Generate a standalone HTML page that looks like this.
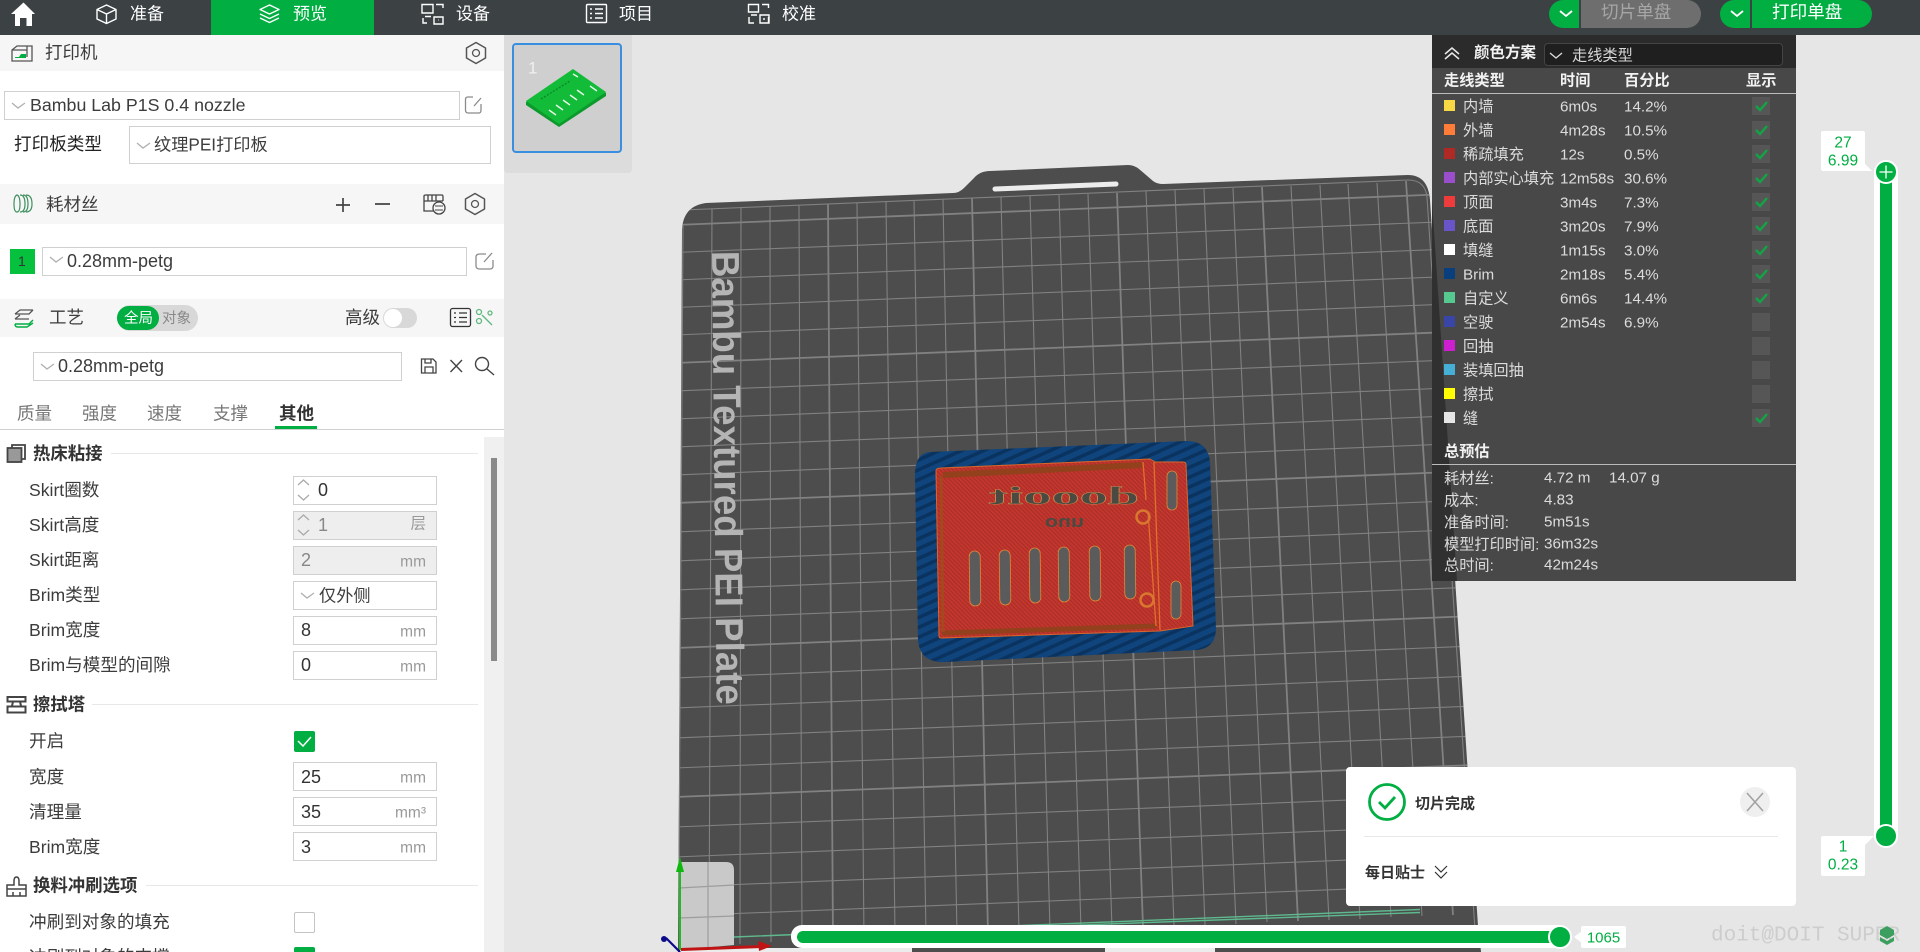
<!DOCTYPE html>
<html lang="zh">
<head>
<meta charset="utf-8">
<title>Bambu Studio</title>
<style>
html,body{margin:0;padding:0;width:1920px;height:952px;overflow:hidden;background:#e6e6e6}
body{position:relative;font-family:"Liberation Sans","Noto Sans CJK SC",sans-serif;color:#333}
.a{position:absolute}
.t{position:absolute;white-space:nowrap;line-height:1;transform:translateY(-50%)}
.c{margin-top:1px}
svg{position:absolute;overflow:visible}
.box{position:absolute;box-sizing:border-box;border:1.5px solid #d0d0d0;background:#fff}
.lab{font-size:17.6px;left:29px;color:#3c3c3c;margin-top:1px}
.val{font-size:18px;color:#333}
.unit{font-size:15.5px;color:#999;right:1494px}
.sec{font-size:17.4px;font-weight:700;left:33px;color:#333;margin-top:1px}
.hr{position:absolute;height:1px;background:#e8e8e8;right:1442px}
.p{font-size:15.2px;color:#dcdcdc}
.ph{font-size:15.2px;color:#f2f2f2;font-weight:700;margin-top:1px}
.sw{position:absolute;left:1444px;width:11px;height:11px}
.cb{position:absolute;left:1752px;width:18px;height:18px;background:#565656}
.g{color:#00ae42;font-size:15px}
</style>
</head>
<body>

<!-- 3D viewport -->
<svg width="1920" height="952" style="left:0;top:0" viewBox="0 0 1920 952">
<defs>
<clipPath id="pl"><path d="M678 960L682 230Q683 206 706 203L953 193Q959 193 964 188L974 178Q980 171 990 171L1128 165Q1134 165 1139 169L1153 181Q1157 184 1163 184L1408 175Q1428 175 1430 200L1478 926L1482 960Z"/></clipPath>
<pattern id="hb" width="9" height="9" patternUnits="userSpaceOnUse" patternTransform="rotate(-24)">
<rect width="9" height="9" fill="#0f447d"/><rect width="9" height="3.500" fill="#0a335f"/>
</pattern>
<pattern id="hr" width="3" height="3" patternUnits="userSpaceOnUse" patternTransform="rotate(45)">
<rect width="3" height="3" fill="#c4372e"/><rect width="3" height="1.200" fill="#ab2e28"/>
</pattern>
</defs>
<path d="M678 960L682 230Q683 206 706 203L953 193Q959 193 964 188L974 178Q980 171 990 171L1128 165Q1134 165 1139 169L1153 181Q1157 184 1163 184L1408 175Q1428 175 1430 200L1478 926L1482 960Z" fill="#4c4d4c"/>
<g clip-path="url(#pl)" fill="none" stroke="#808180">
<path stroke-width="1.100" d="M670 252.7L1490 219.9M670 280.2L1490 247.4M670 307.7L1490 274.9M670 335.2L1490 302.4M670 391.2L1490 358.4M670 419.2L1490 386.4M670 447.2L1490 414.4M670 475.2L1490 442.4M670 532.2L1490 499.4M670 561.2L1490 528.4M670 590.2L1490 557.4M670 619.2L1490 586.4M670 678.2L1490 645.4M670 708.2L1490 675.4M670 738.2L1490 705.4M670 768.2L1490 735.4M670 827.2L1490 794.4M670 857.2L1490 824.4M670 887.2L1490 854.4M670 916.2L1490 883.4"/>
<path stroke-width="1.800" d="M670 225.2L1490 192.4M670 363.2L1490 330.4M670 503.2L1490 470.4M670 648.2L1490 615.4M670 797.2L1490 764.4"/>
<path stroke-width="1.100" d="M712 208.5L709 945M741 207L740 944M770 206L771 942M799 205L802 941M857 203L864 939M886 202L895 937M914 200L926 936M943 199L957 935M1001 197L1019 932M1030 196L1050 931M1059 195L1081 930M1088 194L1112 929M1146 191L1174 926M1175 190L1205 925M1204 189L1236 924M1233 188L1267 922M1291 186L1329 920M1320 185L1360 919M1348 184L1391 917M1377 183L1422 916"/>
<path stroke-width="1.800" d="M828 204L833 940M972 198L988 934M1117 193L1143 927M1262 187L1298 921M1406 181L1453 915"/>
<path stroke-width="1.100" d="M683 210L1408 180Q1425 180 1427 197L1475 930M683 226L679 870"/>
</g>
<path d="M995 189L1116 184" stroke="#ececec" stroke-width="5" stroke-linecap="round"/>

<!-- Plate label -->
<text transform="translate(712,251) rotate(89.4)" font-family="'Liberation Sans',sans-serif" font-weight="700" font-size="39" fill="#b4b4b4" textLength="454" lengthAdjust="spacingAndGlyphs">Bambu Textured PEI Plate</text>

<!-- wipe tower -->
<path d="M679 862L726 862Q734 862 734 870L734 945L679 950Z" fill="#c9c9c9"/>
<path d="M679 888L734 885M679 918L734 916M708 862L708 948" stroke="#9d9d9d" stroke-width="1.200" fill="none"/>
<path d="M734 937L1420 909.5M1000 928L1420 912.5" stroke="#5fb98f" stroke-width="1.400" fill="none"/>

<!-- bottom strip -->
<rect x="680" y="948" width="232" height="4" fill="#ececec"/>
<rect x="1105" y="948" width="110" height="4" fill="#ececec"/>

<!-- Model brim -->
<path d="M930 452L1187 441Q1208 441 1210 462L1216 628Q1216 648 1197 650L945 662Q920 663 918 640L915 475Q915 453 930 452Z" fill="url(#hb)"/>
<!-- Model body -->
<path d="M941 468L1150 459L1155 462L1183 462Q1186 462 1186 465L1193 626L1160 631L941 638Q939 638 939 636L936 471Q936 468 941 468Z" fill="url(#hr)" stroke="#d9672a" stroke-width="1"/>
<path d="M943 475L1142 465" stroke="#93401c" stroke-width="6"/>
<path d="M942 633L1156 626" stroke="#93401c" stroke-width="5"/>
<path d="M941 476L943 632" stroke="#a24a1e" stroke-width="3"/>
<path d="M1143 462L1146 500M1154 462L1160 630M1148 512L1156 626" stroke="#e0702a" stroke-width="1.300" fill="none"/>
<g fill="#5b5b5b" stroke="#e0893a" stroke-width=".8">
<rect x="969.5" y="551" width="11" height="55" rx="5.500" transform="rotate(-.8 975 578)"/>
<rect x="999.5" y="550" width="11" height="55" rx="5.500" transform="rotate(-.8 1005 577)"/>
<rect x="1029.5" y="548" width="11" height="55" rx="5.500" transform="rotate(-.8 1035 575)"/>
<rect x="1058.5" y="547" width="11" height="55" rx="5.500" transform="rotate(-.8 1064 574)"/>
<rect x="1089.5" y="546" width="11" height="55" rx="5.500" transform="rotate(-.8 1095 573)"/>
<rect x="1124.5" y="545" width="11" height="54" rx="5.500" transform="rotate(-.8 1130 572)"/>
<rect x="1167" y="471" width="10" height="39" rx="5"/>
<rect x="1171" y="581" width="10" height="38" rx="5"/>
</g>
<circle cx="1143" cy="517" r="6.500" fill="none" stroke="#d9772f" stroke-width="2.500"/>
<circle cx="1147" cy="600" r="6.500" fill="none" stroke="#d9772f" stroke-width="2.500"/>
<text transform="translate(1139,504) scale(-1,1)" font-family="'Liberation Serif',serif" font-weight="700" font-size="25" fill="#4a4a42" stroke="#c99050" stroke-width=".4" textLength="150" lengthAdjust="spacingAndGlyphs">doooit</text>
<text transform="translate(1084,527) scale(-1,1)" font-family="'Liberation Sans',sans-serif" font-weight="700" font-size="17" fill="#4a4a42" textLength="39" lengthAdjust="spacingAndGlyphs">uno</text>

<!-- Axes -->
<path d="M680 950L680 866" stroke="#0fb80f" stroke-width="1.800"/>
<path d="M680 857L684 872L676 872Z" fill="#0fb80f"/>
<path d="M681 949.500L762 946.500" stroke="#c01414" stroke-width="3"/>
<path d="M772 946L758 941L759 951Z" fill="#c01414"/>
<path d="M680 952L666 938" stroke="#0a0a8a" stroke-width="2.200"/>
<circle cx="664" cy="939" r="3" fill="#0a0a8a"/>
</svg>

<!-- Thumbnail panel -->
<div class="a" style="left:504px;top:35px;width:128px;height:138px;background:#dcdcdc;border-radius:0 0 4px 4px"></div>
<div class="a" style="left:512px;top:43px;width:110px;height:110px;box-sizing:border-box;border:2px solid #3a8ee0;border-radius:4px;background:#cfcfcf"></div>
<div class="t" style="left:528px;top:68px;font-size:17px;color:#f0f0f0">1</div>
<svg style="left:0;top:0" width="700" height="200">
<path d="M573 70L606 93L606 96L559 127L526 105L526 102Z" fill="#0c9a2c"/>
<path d="M573 69L606 92L559 124L526 101Z" fill="#12bb38"/>
<path d="M541 99L570 81" stroke="#0a8a2a" stroke-width="1.400" stroke-dasharray="2 1.500" fill="none"/>
<path d="M549 110L556 115M556 105L563 110M563 100L570 105M570 95L577 100M577 90L584 95M590 86L597 91M573 74L578 77" stroke="#e8fbe8" stroke-width="1.400" fill="none"/>
</svg>

<!-- Top bar -->
<div class="a" style="left:0;top:0;width:1920px;height:35px;background:#3c4144"></div>
<div class="a" style="left:211px;top:0;width:163px;height:35px;background:#00ae42"></div>
<svg style="left:0;top:0" width="1000" height="35" fill="none" stroke="#fff" stroke-width="1.400">
<path d="M11 14L23.500 2.500L35 14L32 14L32 26L26.500 26L26.500 18L20 18L20 26L15 26L15 14Z" fill="#fff" stroke="none"/>
<path d="M106.500 5L116 9.500L116 19L106.500 23.500L97 19L97 9.500ZM97 9.500L106.500 14L116 9.500M106.500 14L106.500 23.500" stroke-linejoin="round"/>
<path d="M269.500 5L279 9.500L269.500 14L260 9.500ZM260 14L269.500 18.500L279 14M260 18L269.500 22.500L279 18" stroke-linejoin="round"/>
<path d="M422 4.500H433V13H422ZM425 16.500H431M423 18V23H427M436 4.500H443V8M443 24V18M438 24H443M434 17H443V24H434ZM438.500 20H439"/>
<rect x="586.500" y="4.500" width="20" height="18" rx="1"/>
<path d="M590 9H592M595 9H603M590 13.500H592M595 13.500H603M590 18H592M595 18H603"/>
<path d="M748.500 4.500H758.500V12H748.500ZM751 15H757M749 17V23H754M762 4.500H768.500V8M768.500 23V17M764 23H769M760 15H769V23H760ZM764 18V20"/>
</svg>
<div class="t c" style="left:130px;top:13px;font-size:17px;color:#fff">准备</div>
<div class="t c" style="left:293px;top:13px;font-size:17px;color:#fff">预览</div>
<div class="t c" style="left:456px;top:13px;font-size:17px;color:#fff">设备</div>
<div class="t c" style="left:619px;top:13px;font-size:17px;color:#fff">项目</div>
<div class="t c" style="left:782px;top:13px;font-size:17px;color:#fff">校准</div>

<!-- Top-right buttons -->
<div class="a" style="left:1549px;top:0;width:30px;height:28px;background:#00ae42;border-radius:14px 0 0 14px"></div>
<div class="a" style="left:1581px;top:0;width:120px;height:28px;background:#6e6e6e;border-radius:0 14px 14px 0"></div>
<div class="t" style="left:1601px;top:13px;font-size:17.600px;color:#a6a6a6">切片单盘</div>
<div class="a" style="left:1720px;top:0;width:30px;height:28px;background:#00ae42;border-radius:14px 0 0 14px"></div>
<div class="a" style="left:1752px;top:0;width:120px;height:28px;background:#00ae42;border-radius:0 14px 14px 0"></div>
<div class="t" style="left:1772px;top:13px;font-size:17.600px;color:#fff">打印单盘</div>
<svg style="left:1540px;top:0" width="240" height="30" fill="none" stroke="#fff" stroke-width="1.800"><path d="M20 11L26 16L32 11M191 11L197 16L203 11"/></svg>

<!-- Sidebar -->
<div class="a" style="left:0;top:35px;width:504px;height:917px;background:#fff"></div>
<div class="a" style="left:0;top:35px;width:504px;height:36px;background:#f6f6f6"></div>
<div class="a" style="left:0;top:184px;width:504px;height:40px;background:#f6f6f6"></div>
<div class="a" style="left:0;top:299px;width:504px;height:38px;background:#f6f6f6"></div>
<div class="a" style="left:484px;top:437px;width:20px;height:515px;background:#f0f0f0"></div>
<div class="a" style="left:491px;top:458px;width:6px;height:203px;background:#8a8a8a"></div>

<div class="t c" style="left:45px;top:52px;font-size:17.500px;color:#3c3c3c">打印机</div>
<div class="box" style="left:4px;top:91px;width:456px;height:29px;background:transparent"></div>
<div class="t" style="left:30px;top:106px;font-size:17.800px;color:#3c3c3c">Bambu Lab P1S 0.4 nozzle</div>
<div class="t c" style="left:14px;top:144px;font-size:17.600px;color:#222">打印板类型</div>
<div class="box" style="left:129px;top:126px;width:362px;height:38px;background:transparent"></div>
<div class="t c" style="left:154px;top:144px;font-size:17.200px;color:#3c3c3c">纹理PEI打印板</div>

<div class="t c" style="left:46px;top:204px;font-size:17.500px;color:#3c3c3c">耗材丝</div>
<div class="a" style="left:10px;top:249px;width:25px;height:25px;background:#05c13e"></div>
<div class="t" style="left:18px;top:261px;font-size:14px;color:#333">1</div>
<div class="box" style="left:42px;top:247px;width:425px;height:29px;background:transparent"></div>
<div class="t" style="left:67px;top:261px;font-size:18px;color:#3c3c3c">0.28mm-petg</div>

<div class="t c" style="left:49px;top:317px;font-size:17.500px;color:#3c3c3c">工艺</div>
<div class="a" style="left:117px;top:305px;width:81px;height:26px;background:#d8d8d8;border-radius:13px"></div>
<div class="a" style="left:117px;top:306px;width:42px;height:24px;background:#00ae42;border-radius:12px"></div>
<div class="t c" style="left:124px;top:318px;font-size:14.500px;color:#fff">全局</div>
<div class="t c" style="left:162px;top:318px;font-size:14.500px;color:#888">对象</div>
<div class="t c" style="left:345px;top:317px;font-size:17.500px;color:#3c3c3c">高级</div>
<div class="a" style="left:383px;top:308px;width:34px;height:20px;background:#d8d8d8;border-radius:10px"></div>
<div class="a" style="left:384px;top:309px;width:18px;height:18px;background:#fff;border-radius:9px"></div>

<div class="box" style="left:33px;top:352px;width:369px;height:29px"></div>
<div class="t" style="left:58px;top:366px;font-size:18px;color:#3c3c3c">0.28mm-petg</div>

<div class="t c" style="left:17px;top:413px;font-size:17.500px;color:#777">质量</div>
<div class="t c" style="left:82px;top:413px;font-size:17.500px;color:#777">强度</div>
<div class="t c" style="left:147px;top:413px;font-size:17.500px;color:#777">速度</div>
<div class="t c" style="left:213px;top:413px;font-size:17.500px;color:#777">支撑</div>
<div class="t c" style="left:279px;top:413px;font-size:17.500px;color:#333;font-weight:700">其他</div>
<div class="a" style="left:0;top:429px;width:504px;height:1px;background:#d0d0d0"></div>
<div class="a" style="left:275px;top:426px;width:42px;height:3px;background:#00ae42"></div>

<div class="t sec" style="top:453px">热床粘接</div><div class="hr" style="left:111px;top:453px"></div>
<div class="t lab" style="top:490px">Skirt圈数</div>
<div class="box" style="left:293px;top:476px;width:144px;height:29px"></div>
<div class="t val" style="left:318px;top:490px">0</div>
<div class="t lab" style="top:525px">Skirt高度</div>
<div class="box" style="left:293px;top:511px;width:144px;height:29px;background:#eee"></div>
<div class="t val" style="left:318px;top:525px;color:#888">1</div>
<div class="t unit" style="top:524px;color:#999">层</div>
<div class="t lab" style="top:560px">Skirt距离</div>
<div class="box" style="left:293px;top:546px;width:144px;height:29px;background:#eee"></div>
<div class="t val" style="left:301px;top:560px;color:#888">2</div>
<div class="t unit" style="top:562px">mm</div>
<div class="t lab" style="top:595px">Brim类型</div>
<div class="box" style="left:293px;top:581px;width:144px;height:29px"></div>
<div class="t c" style="left:319px;top:595px;font-size:17.200px;color:#3c3c3c">仅外侧</div>
<div class="t lab" style="top:630px">Brim宽度</div>
<div class="box" style="left:293px;top:616px;width:144px;height:29px"></div>
<div class="t val" style="left:301px;top:630px">8</div>
<div class="t unit" style="top:632px">mm</div>
<div class="t lab" style="top:665px">Brim与模型的间隙</div>
<div class="box" style="left:293px;top:651px;width:144px;height:29px"></div>
<div class="t val" style="left:301px;top:665px">0</div>
<div class="t unit" style="top:667px">mm</div>

<div class="t sec" style="top:704px">擦拭塔</div><div class="hr" style="left:92px;top:704px"></div>
<div class="t lab" style="top:741px">开启</div>
<div class="a" style="left:294px;top:731px;width:21px;height:21px;background:#00ae42;border-radius:2px"></div>
<div class="t lab" style="top:777px">宽度</div>
<div class="box" style="left:293px;top:762px;width:144px;height:29px"></div>
<div class="t val" style="left:301px;top:777px">25</div>
<div class="t unit" style="top:778px">mm</div>
<div class="t lab" style="top:812px">清理量</div>
<div class="box" style="left:293px;top:797px;width:144px;height:29px"></div>
<div class="t val" style="left:301px;top:812px">35</div>
<div class="t unit" style="top:813px">mm³</div>
<div class="t lab" style="top:847px">Brim宽度</div>
<div class="box" style="left:293px;top:832px;width:144px;height:29px"></div>
<div class="t val" style="left:301px;top:847px">3</div>
<div class="t unit" style="top:848px">mm</div>

<div class="t sec" style="top:885px">换料冲刷选项</div><div class="hr" style="left:146px;top:885px"></div>
<div class="t lab" style="top:922px">冲刷到对象的填充</div>
<div class="a" style="left:294px;top:912px;width:21px;height:21px;box-sizing:border-box;border:1.500px solid #c4c4c4;border-radius:2px;background:#fff"></div>
<div class="t lab" style="top:957px">冲刷到对象的支撑</div>
<div class="a" style="left:294px;top:947px;width:21px;height:21px;background:#00ae42;border-radius:2px"></div>

<!-- Sidebar icons, above the boxes -->
<svg style="left:0;top:0" width="504" height="952" fill="none" stroke="#555" stroke-width="1.300">
<path d="M12 50V61H32V46H17ZM12 50L17 46M27 46V57M12 50H27"/>
<path d="M15 58H26L26 54H21L19 57H15Z" fill="#00ae42" stroke="none"/>
<path d="M476 42.500L485.500 48V58L476 63.500L466.500 58V48Z" stroke-linejoin="round" stroke-width="1.500"/><circle cx="476" cy="53" r="3.500"/>
<path d="M475 193.500L484.500 199V209L475 214.500L465.500 209V199Z" stroke-linejoin="round" stroke-width="1.500"/><circle cx="475" cy="204" r="3.500"/>
<path d="M473 97H468Q465.500 97 465.500 99.500V110Q465.500 113 468 113H479Q481 113 481 110V104M474 106L481 98" stroke="#8b8b8b"/>
<path d="M486 254H480Q476 254 476 257V266Q476 269 480 269H490Q493 269 493 266V260M484 262L492 253" stroke="#8b8b8b"/>
<path d="M12 103L18 108L25 103M137 143L143 148L150 143M50 257L56 262L63 257M41 364L47 369L54 364M301 593L307 598L314 593" stroke="#b0b0b0"/>
<path d="M17 195Q14 196 14 204Q14 212 17 212Q20 212 20 204Q20 196 17 195ZM20 195Q25 195 25 204Q25 212 20 212M23 195Q28 195 28 204Q28 212 23 212M26 195Q32 195 32 204Q32 212 26 212" stroke="#3f8f5f" stroke-width="1.200"/>
<path d="M336 205H350M343 198V212M375 204H390" stroke="#444" stroke-width="1.700"/>
<path d="M424 202V196Q424 195 426 195H442Q443 195 443 197V201M424 202V211H434M424 201H443M428 195V201M432 195V201M436 195V201" stroke="#444"/>
<circle cx="439" cy="208" r="6" stroke="#444" fill="#f6f6f6"/>
<path d="M435 206H443M435 210H443" stroke="#444" stroke-width="1"/>
<path d="M15 314L20 310H33M15 314H29L33 310M15 319H29M15 319L20 315" stroke="#555"/>
<path d="M15 324H29L33 320M15 324Q15 327 18 327H27L33 323" stroke="#00ae42" stroke-width="1.400"/>
<rect x="450.500" y="308.500" width="20" height="18" rx="2" stroke="#333"/>
<path d="M454 313H456M459 313H467M454 317.500H456M459 317.500H467M454 322H456M459 322H467" stroke="#333"/>
<g stroke="#5fb97f"><circle cx="479" cy="312" r="2.500"/><circle cx="490" cy="313" r="2"/><circle cx="479" cy="321" r="2.500"/><path d="M482 315L492 325"/></g>
<path d="M421.500 359H433L436 362V373H421.500ZM425 359V363H431V359M425 373V367H433V373" stroke="#444"/>
<path d="M450.500 360L462 372M462 360L450.500 372" stroke="#444" stroke-width="1.400"/>
<circle cx="482" cy="364" r="6.500" stroke="#444" stroke-width="1.400"/>
<path d="M487 369L494 375" stroke="#444" stroke-width="1.400"/>
<rect x="7.500" y="448" width="14" height="14" fill="#999" stroke="#444" stroke-width="1.800"/>
<path d="M12 448V445H25V459H21.500" stroke="#444" stroke-width="1.800"/>
<path d="M7.500 697H25.500V701.500H7.500ZM13 701.500L12 706M20 701.500L21 706M7.500 706.500H25.500V712.500H7.500Z" stroke="#444" stroke-width="2"/>
<path d="M7 885H14V881Q14 877 16.500 877Q19 877 19 881V885H26V896H7ZM7 889H26M13 896V892M20 896V892" stroke="#444" stroke-width="1.500"/>
<path d="M298 485L303.500 480L309 485M298 495L303.500 500L309 495M298 520L303.500 515L309 520M298 530L303.500 535L309 530" stroke="#aaa"/>
<path d="M298 741L303 746L311 737" stroke="#fff" stroke-width="1.500"/>
</svg>

<!-- Legend panel -->
<div class="a" style="left:1432px;top:35px;width:364px;height:546px;background:#484848"></div>
<svg style="left:0;top:0" width="1920" height="600"><path d="M1432 200L1457 581L1432 581Z" fill="#2f302f"/></svg>
<div class="a" style="left:1432px;top:35px;width:364px;height:33px;background:#2b2b2b"></div>
<svg style="left:0;top:0" width="1920" height="100" fill="none" stroke="#e8e8e8" stroke-width="1.500">
<path d="M1445 54L1452 48L1459 54M1445 59L1452 53L1459 59"/>
</svg>
<div class="t ph" style="left:1474px;top:52px;font-size:15.500px">颜色方案</div>
<div class="a" style="left:1544px;top:43px;width:239px;height:23px;box-sizing:border-box;background:#1f1f1f;border:1px solid #444;border-radius:4px"></div>
<svg style="left:0;top:0" width="1920" height="100" fill="none" stroke="#ddd" stroke-width="1.300"><path d="M1550 53L1556 58L1562 53"/></svg>
<div class="t p c" style="left:1572px;top:55px;color:#d8d8d8">走线类型</div>
<div class="t ph" style="left:1444px;top:80px">走线类型</div>
<div class="t ph" style="left:1560px;top:80px">时间</div>
<div class="t ph" style="left:1624px;top:80px">百分比</div>
<div class="t ph" style="left:1746px;top:80px">显示</div>
<div class="a" style="left:1432px;top:93px;width:364px;height:1px;background:#bbb"></div>

<div class="sw" style="top:100px;background:#f9d845"></div><div class="t p c" style="left:1463px;top:106px">内墙</div><div class="t p" style="left:1560px;top:107px">6m0s</div><div class="t p" style="left:1624px;top:107px">14.2%</div><div class="cb" style="top:97px"></div>
<div class="sw" style="top:124px;background:#ff7d38"></div><div class="t p c" style="left:1463px;top:130px">外墙</div><div class="t p" style="left:1560px;top:131px">4m28s</div><div class="t p" style="left:1624px;top:131px">10.5%</div><div class="cb" style="top:121px"></div>
<div class="sw" style="top:148px;background:#b02a25"></div><div class="t p c" style="left:1463px;top:154px">稀疏填充</div><div class="t p" style="left:1560px;top:155px">12s</div><div class="t p" style="left:1624px;top:155px">0.5%</div><div class="cb" style="top:145px"></div>
<div class="sw" style="top:172px;background:#9a4ecb"></div><div class="t p c" style="left:1463px;top:178px">内部实心填充</div><div class="t p" style="left:1560px;top:179px">12m58s</div><div class="t p" style="left:1624px;top:179px">30.6%</div><div class="cb" style="top:169px"></div>
<div class="sw" style="top:196px;background:#ee3c3c"></div><div class="t p c" style="left:1463px;top:202px">顶面</div><div class="t p" style="left:1560px;top:203px">3m4s</div><div class="t p" style="left:1624px;top:203px">7.3%</div><div class="cb" style="top:193px"></div>
<div class="sw" style="top:220px;background:#6a55c8"></div><div class="t p c" style="left:1463px;top:226px">底面</div><div class="t p" style="left:1560px;top:227px">3m20s</div><div class="t p" style="left:1624px;top:227px">7.9%</div><div class="cb" style="top:217px"></div>
<div class="sw" style="top:244px;background:#ffffff"></div><div class="t p c" style="left:1463px;top:250px">填缝</div><div class="t p" style="left:1560px;top:251px">1m15s</div><div class="t p" style="left:1624px;top:251px">3.0%</div><div class="cb" style="top:241px"></div>
<div class="sw" style="top:268px;background:#0a3f7e"></div><div class="t p" style="left:1463px;top:275px">Brim</div><div class="t p" style="left:1560px;top:275px">2m18s</div><div class="t p" style="left:1624px;top:275px">5.4%</div><div class="cb" style="top:265px"></div>
<div class="sw" style="top:292px;background:#55c98f"></div><div class="t p c" style="left:1463px;top:298px">自定义</div><div class="t p" style="left:1560px;top:299px">6m6s</div><div class="t p" style="left:1624px;top:299px">14.4%</div><div class="cb" style="top:289px"></div>
<div class="sw" style="top:316px;background:#3a45a8"></div><div class="t p c" style="left:1463px;top:322px">空驶</div><div class="t p" style="left:1560px;top:323px">2m54s</div><div class="t p" style="left:1624px;top:323px">6.9%</div><div class="cb" style="top:313px"></div>
<div class="sw" style="top:340px;background:#cc1fd0"></div><div class="t p c" style="left:1463px;top:346px">回抽</div><div class="cb" style="top:337px"></div>
<div class="sw" style="top:364px;background:#45afd6"></div><div class="t p c" style="left:1463px;top:370px">装填回抽</div><div class="cb" style="top:361px"></div>
<div class="sw" style="top:388px;background:#ffff00"></div><div class="t p c" style="left:1463px;top:394px">擦拭</div><div class="cb" style="top:385px"></div>
<div class="sw" style="top:412px;background:#e6e6e6"></div><div class="t p c" style="left:1463px;top:418px">缝</div><div class="cb" style="top:409px"></div>

<svg style="left:0;top:0" width="1920" height="500" fill="none" stroke="#10a545" stroke-width="2.400">
<path d="M1756 106L1760 110L1767 102M1756 130L1760 134L1767 126M1756 154L1760 158L1767 150M1756 178L1760 182L1767 174M1756 202L1760 206L1767 198M1756 226L1760 230L1767 222M1756 250L1760 254L1767 246M1756 274L1760 278L1767 270M1756 298L1760 302L1767 294M1756 418L1760 422L1767 414"/>
</svg>

<div class="t ph" style="left:1444px;top:451px">总预估</div>
<div class="a" style="left:1432px;top:464px;width:364px;height:1px;background:#bbb"></div>
<div class="t p c" style="left:1444px;top:478px">耗材丝:</div><div class="t p" style="left:1544px;top:478px">4.72 m</div><div class="t p" style="left:1609px;top:478px">14.07 g</div>
<div class="t p c" style="left:1444px;top:500px">成本:</div><div class="t p" style="left:1544px;top:500px">4.83</div>
<div class="t p c" style="left:1444px;top:522px">准备时间:</div><div class="t p" style="left:1544px;top:522px">5m51s</div>
<div class="t p c" style="left:1444px;top:544px">模型打印时间:</div><div class="t p" style="left:1544px;top:544px">36m32s</div>
<div class="t p c" style="left:1444px;top:565px">总时间:</div><div class="t p" style="left:1544px;top:565px">42m24s</div>

<!-- Vertical slider -->
<div class="a" style="left:1874px;top:164px;width:24px;height:682px;background:#fff;border-radius:12px"></div>
<div class="a" style="left:1880px;top:172px;width:12px;height:664px;background:#00ae42"></div>
<div class="a" style="left:1874px;top:160px;width:20px;height:20px;background:#00ae42;border-radius:50%;border:2px solid #fff"></div>
<svg style="left:0;top:0" width="1920" height="200" fill="none" stroke="#fff" stroke-width="1.300"><path d="M1886 165.500V178.500M1879.500 172H1892.500"/></svg>
<div class="a" style="left:1874px;top:824px;width:20px;height:20px;background:#00ae42;border-radius:50%;border:2px solid #fff"></div>
<div class="a" style="left:1821px;top:131px;width:44px;height:40px;background:#fff;border-radius:2px"></div>
<div class="t g" style="left:1821px;width:44px;text-align:center;top:143px;font-size:15.500px">27</div>
<div class="t g" style="left:1821px;width:44px;text-align:center;top:161px;font-size:15.500px">6.99</div>
<div class="a" style="left:1821px;top:836px;width:44px;height:40px;background:#fff;border-radius:2px"></div>
<div class="t g" style="left:1821px;width:44px;text-align:center;top:847px;font-size:15.500px">1</div>
<div class="t g" style="left:1821px;width:44px;text-align:center;top:865px;font-size:15.500px">0.23</div>
<svg style="left:0;top:0" width="1920" height="952" fill="#fff"><path d="M1864 163L1872 171L1864 171ZM1864 836L1874 836L1864 846ZM1574 937L1582 931V943Z"/></svg>

<!-- Notification -->
<div class="a" style="left:1346px;top:767px;width:450px;height:139px;background:#fff;border-radius:4px"></div>
<svg style="left:0;top:0" width="1920" height="952" fill="none">
<circle cx="1387" cy="802" r="17.500" stroke="#00ae42" stroke-width="2.800"/>
<path d="M1379 802L1385 808L1395 797" stroke="#00ae42" stroke-width="2.800"/>
<circle cx="1755" cy="802" r="15" fill="#efefef"/>
<path d="M1747 793L1763 811M1763 793L1747 811" stroke="#a2a2a2" stroke-width="1.600"/>
<path d="M1435 866L1441 872L1447 866M1435 872L1441 878L1447 872" stroke="#333" stroke-width="1.200"/>
</svg>
<div class="t c" style="left:1415px;top:803px;font-size:15px;font-weight:700;color:#333">切片完成</div>
<div class="a" style="left:1364px;top:836px;width:414px;height:1px;background:#e8e8e8"></div>
<div class="t c" style="left:1365px;top:872px;font-size:15px;font-weight:700;color:#333">每日贴士</div>

<!-- Bottom slider -->
<div class="a" style="left:791px;top:925px;width:779px;height:23px;background:#fff;border-radius:11px"></div>
<div class="a" style="left:797px;top:931px;width:763px;height:12px;background:#00ae42;border-radius:6px 0 0 6px"></div>
<div class="a" style="left:1548px;top:925px;width:20px;height:20px;background:#00ae42;border-radius:50%;border:2px solid #fff"></div>
<div class="a" style="left:1581px;top:926px;width:45px;height:22px;background:#fff;border-radius:2px"></div>
<div class="t g" style="left:1581px;width:45px;text-align:center;top:938px">1065</div>

<!-- Watermark -->
<div class="t" style="left:1711px;top:936px;font-family:'Liberation Mono',monospace;font-size:21px;color:#cdcdcd">doit@DOIT SUPER</div>
<svg style="left:0;top:0" width="1920" height="952"><path d="M1887 926L1894 930V935L1887 939L1880 935V930Z" fill="#3d9f5f"/><path d="M1880 937L1887 941L1894 937V941L1887 945L1880 941Z" fill="#3d9f5f"/></svg>

</body>
</html>
